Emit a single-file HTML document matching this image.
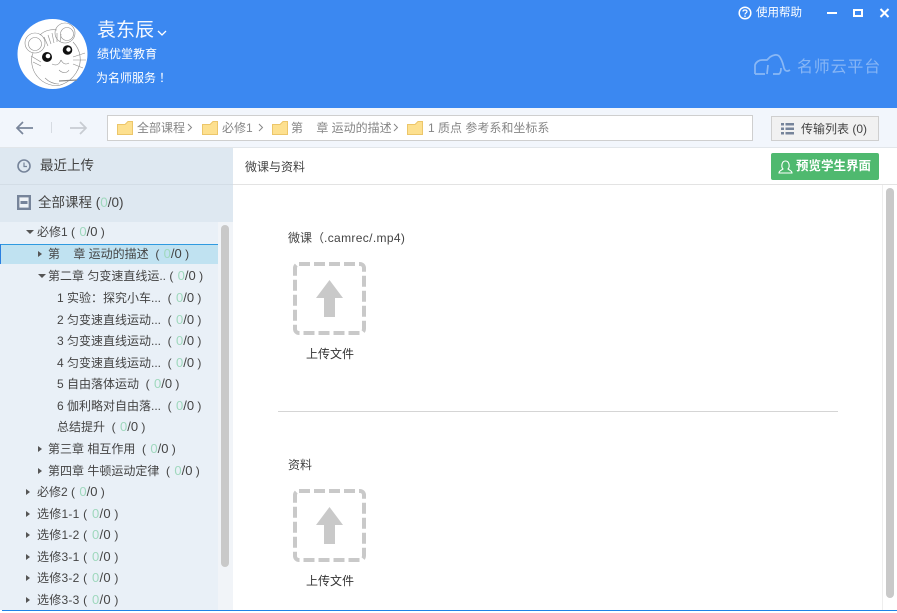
<!DOCTYPE html>
<html><head><meta charset="utf-8">
<style>
*{margin:0;padding:0;box-sizing:border-box}
html,body{width:897px;height:613px;overflow:hidden;background:#fff;font-family:"Liberation Sans","Noto Sans CJK SC",sans-serif;font-size:12px;color:#333}
.a{position:absolute}
.t{position:absolute;white-space:pre;line-height:16px;font-size:12px;color:#444}
.t i{font-style:normal;color:#9fd8bd;margin-left:1px}
.t b{font-weight:normal;font-size:13px}
.x{letter-spacing:.25px}
.tri{position:absolute;width:0;height:0}
.r{border-left:4px solid #555;border-top:3.5px solid transparent;border-bottom:3.5px solid transparent}
.d{border-top:4px solid #555;border-left:4px solid transparent;border-right:4px solid transparent}
.bc{position:absolute;top:121px;white-space:pre;line-height:14px;font-size:12px;color:#858585}
</style></head><body>
<div class="a" style="left:0;top:0;width:897px;height:108px;background:#3b88f1"></div>

<svg class="a" style="left:17px;top:18px" width="72" height="72" viewBox="0 0 72 72">
<circle cx="35.500" cy="36" r="35" fill="#fff"/>
<g fill="none" stroke="#8a8a8a" stroke-width=".6">
<circle cx="18" cy="25" r="10"/><circle cx="48" cy="15" r="10"/><circle cx="18" cy="26" r="6.500"/><circle cx="50" cy="16" r="6.500"/>
<path d="M23 17C28 12 35 11 40 12"/>
<path d="M16 35C13 42 15 52 20 58C26 66 38 70 46 66C56 62 65 50 63 38C62 30 58 26 56 24"/>
<path d="M31 28L27 19M34 26L31 17M37 25L35 15M40 24L40 15M43 24L44 16"/>
<path d="M56 39L68 35M56 42L69 42M56 46L66 50M14 38L24 44M16 44L24 48"/>
<path d="M44 42C42 47 39 48 35 46M44 42C46 46 49 47 52 45M42 52C46 56 50 55 52 52M28 60C32 64 36 66 42 66"/>
<path d="M42 63L60 62" stroke-width="1.200"/>
</g>
<circle cx="30" cy="39" r="5" fill="#111"/><circle cx="31" cy="38" r="2.300" fill="#fff"/>
<circle cx="50.500" cy="32" r="4.800" fill="#111"/><circle cx="51.500" cy="31.500" r="2.200" fill="#fff"/>
</svg>

<div class="a" style="left:97px;top:19px;font-size:19px;line-height:24px;color:#fff;opacity:.95">袁东辰</div>
<svg class="a" style="left:157px;top:30px" width="10" height="7"><path d="M1 1L5 5L9 1" fill="none" stroke="#fff" stroke-width="1.300"/></svg>
<div class="a" style="left:97px;top:46px;font-size:12px;line-height:16px;color:#fff">绩优堂教育</div>
<div class="a" style="left:96px;top:70px;font-size:12px;line-height:16px;color:#fff;white-space:pre">为名师服务<span style="margin-left:3px">！</span></div>

<svg class="a" style="left:738px;top:6px" width="14" height="14" viewBox="0 0 14 14"><circle cx="7" cy="7" r="5.800" fill="none" stroke="#fff" stroke-width="1.500"/><path d="M5 5.500C5 3.500 9 3.500 9 5.500C9 7 7 6.800 7 8.500" fill="none" stroke="#fff" stroke-width="1.200"/><rect x="6.300" y="9.500" width="1.400" height="1.400" fill="#fff"/></svg>
<div class="a" style="left:756px;top:6px;font-size:11.500px;line-height:15px;color:#fff">使用帮助</div>
<div class="a" style="left:827px;top:12px;width:10px;height:2px;background:#fff"></div>
<div class="a" style="left:853px;top:9px;width:10px;height:8px;border:2px solid #fff"></div>
<svg class="a" style="left:879px;top:8px" width="11" height="10"><path d="M1.500 1L9.500 9M9.500 1L1.500 9" stroke="#fff" stroke-width="2"/></svg>

<svg class="a" style="left:753px;top:53px" width="40" height="26" viewBox="0 0 40 26"><path d="M2 21V12C3 9 6 7 9 7H14L17 4C20 2 24 1 26 3C29 6 30 11 31 15C32 18 34 19 37 17M2 21H12M15 12L14 21M20 21H26C28 20 28 17 28 15" fill="none" stroke="#8ab8f5" stroke-width="1.700"/></svg>
<div class="a" style="left:797px;top:58px;font-size:16px;line-height:20px;color:#86b5f5;white-space:pre;letter-spacing:.8px">名师云平台</div>

<div class="a" style="left:0;top:108px;width:897px;height:40px;background:#f2f6fc;border-bottom:1px solid #e2e6ea"></div>
<svg class="a" style="left:15px;top:120px" width="20" height="16"><path d="M18 8H2M8 2L2 8L8 14" fill="none" stroke="#7a869b" stroke-width="1.700"/></svg>
<div class="a" style="left:51px;top:122px;width:1px;height:11px;background:#d6dbe2"></div>
<svg class="a" style="left:68px;top:120px" width="20" height="16"><path d="M2 8H18M12 2L18 8L12 14" fill="none" stroke="#c8ccd2" stroke-width="1.700"/></svg>

<div class="a" style="left:107px;top:115px;width:646px;height:26px;background:#fff;border:1px solid #cfcfcf"></div>
<svg width="0" height="0" style="position:absolute"><defs><symbol id="f" viewBox="0 0 16 14"><path d="M.5 3.500H8L11 .5H15.500V13.500H.5Z" fill="#fde08f" stroke="#ecc66a"/></symbol></defs></svg>
<svg class="a" style="left:117px;top:121px" width="16" height="14"><use href="#f"/></svg>
<div class="bc" style="left:137px">全部课程</div>
<svg class="a" style="left:187px;top:123px" width="6" height="9"><path d="M1 1L4.500 4.500L1 8" fill="none" stroke="#888"/></svg>
<svg class="a" style="left:202px;top:121px" width="16" height="14"><use href="#f"/></svg>
<div class="bc" style="left:222px">必修1</div>
<svg class="a" style="left:258px;top:123px" width="6" height="9"><path d="M1 1L4.500 4.500L1 8" fill="none" stroke="#888"/></svg>
<svg class="a" style="left:272px;top:121px" width="16" height="14"><use href="#f"/></svg>
<div class="bc" style="left:291px">第    章 运动的描述</div>
<svg class="a" style="left:393px;top:123px" width="6" height="9"><path d="M1 1L4.500 4.500L1 8" fill="none" stroke="#888"/></svg>
<svg class="a" style="left:407px;top:121px" width="16" height="14"><use href="#f"/></svg>
<div class="bc" style="left:428px">1 质点 参考系和坐标系</div>

<div class="a" style="left:771px;top:116px;width:108px;height:25px;background:#f1f1f1;border:1px solid #cfcfcf"></div>
<svg class="a" style="left:781px;top:123px" width="13" height="12"><g fill="#76849a"><rect width="3" height="2.500"/><rect x="4.500" width="8.500" height="2.500"/><rect y="4.500" width="3" height="2.500"/><rect x="4.500" y="4.500" width="8.500" height="2.500"/><rect y="9" width="3" height="2.500"/><rect x="4.500" y="9" width="8.500" height="2.500"/></g></svg>
<div class="a" style="left:801px;top:121px;font-size:12px;line-height:16px;color:#444;white-space:pre">传输列表 (0)</div>

<div class="a" style="left:0;top:148px;width:233px;height:462px;background:#e9f0f7"></div>
<div class="a" style="left:0;top:148px;width:233px;height:37px;background:#dee8f1;border-bottom:1px solid #d3dde6"></div>
<div class="a" style="left:0;top:185px;width:233px;height:37px;background:#dee8f1"></div>
<svg class="a" style="left:17px;top:159px" width="14" height="14"><circle cx="7" cy="7" r="6" fill="none" stroke="#76849a" stroke-width="1.600"/><path d="M7 3.500V7.500H10" fill="none" stroke="#76849a" stroke-width="1.200"/></svg>
<div class="a" style="left:40px;top:157px;font-size:13.500px;line-height:18px;color:#444">最近上传</div>
<svg class="a" style="left:17px;top:195px" width="14" height="15"><rect x="1.200" y="1.200" width="11.600" height="12.600" fill="#eef2f6" stroke="#76849a" stroke-width="2.400"/><rect x="3.500" y="6" width="7" height="3" fill="#76849a"/></svg>
<div class="a" style="left:38px;top:194px;font-size:13.500px;line-height:18px;color:#444;white-space:pre">全部课程 (<span style="color:#9fd8bd">0</span>/0)</div>

<div class="a" style="left:0;top:244px;width:218px;height:20px;background:#c0e2f1;border-top:1px solid #2f9ae0"></div>
<div class="a" style="left:0;top:244px;width:1px;height:20px;background:#2a7fe0"></div>

<div class="tri d" style="left:26px;top:230px"></div><div class="t" style="left:37px;top:224px">必修1 ( <b><i>0</i>/0</b> )</div>
<div class="tri r" style="left:38px;top:251px"></div><div class="t" style="left:48px;top:246px">第    章 运动的描述  ( <b><i>0</i>/0</b> )</div>
<div class="tri d" style="left:38px;top:274px"></div><div class="t" style="left:48px;top:268px">第二章 匀变速直线运.. ( <b><i>0</i>/0</b> )</div>
<div class="t" style="left:57px;top:290px">1 实验：探究小车...  ( <b><i>0</i>/0</b> )</div>
<div class="t" style="left:57px;top:312px">2 匀变速直线运动...  ( <b><i>0</i>/0</b> )</div>
<div class="t" style="left:57px;top:333px">3 匀变速直线运动...  ( <b><i>0</i>/0</b> )</div>
<div class="t" style="left:57px;top:355px">4 匀变速直线运动...  ( <b><i>0</i>/0</b> )</div>
<div class="t" style="left:57px;top:376px">5 自由落体运动  ( <b><i>0</i>/0</b> )</div>
<div class="t" style="left:57px;top:398px">6 伽利略对自由落...  ( <b><i>0</i>/0</b> )</div>
<div class="t" style="left:57px;top:419px">总结提升  ( <b><i>0</i>/0</b> )</div>
<div class="tri r" style="left:38px;top:446px"></div><div class="t" style="left:48px;top:441px">第三章 相互作用  ( <b><i>0</i>/0</b> )</div>
<div class="tri r" style="left:38px;top:468px"></div><div class="t" style="left:48px;top:463px">第四章 牛顿运动定律  ( <b><i>0</i>/0</b> )</div>
<div class="tri r" style="left:26px;top:489px"></div><div class="t" style="left:37px;top:484px">必修2 ( <b><i>0</i>/0</b> )</div>
<div class="tri r" style="left:26px;top:511px"></div><div class="t x" style="left:37px;top:506px">选修1-1 ( <b><i>0</i>/0</b> )</div>
<div class="tri r" style="left:26px;top:532px"></div><div class="t x" style="left:37px;top:527px">选修1-2 ( <b><i>0</i>/0</b> )</div>
<div class="tri r" style="left:26px;top:554px"></div><div class="t x" style="left:37px;top:549px">选修3-1 ( <b><i>0</i>/0</b> )</div>
<div class="tri r" style="left:26px;top:575px"></div><div class="t x" style="left:37px;top:570px">选修3-2 ( <b><i>0</i>/0</b> )</div>
<div class="tri r" style="left:26px;top:597px"></div><div class="t x" style="left:37px;top:592px">选修3-3 ( <b><i>0</i>/0</b> )</div>

<div class="a" style="left:218px;top:222px;width:15px;height:388px;background:#f1f4f8"></div>
<div class="a" style="left:221px;top:225px;width:8px;height:342px;background:#c9c9c9;border-radius:4px"></div>

<div class="a" style="left:233px;top:148px;width:664px;height:37px;background:#fff;border-bottom:1px solid #e3e3e3"></div>
<div class="a" style="left:245px;top:159px;font-size:12px;line-height:16px;color:#444">微课与资料</div>
<div class="a" style="left:771px;top:153px;width:108px;height:27px;background:#4fb96f;border-radius:2px"></div>
<svg class="a" style="left:778px;top:159px" width="15" height="15" viewBox="0 0 15 15"><path d="M5 10C3 8 3.500 2 7.500 2C11.500 2 12 8 10 10C11 11 14 11.500 14 14H1C1 11.500 4 11 5 10Z" fill="none" stroke="#fff" stroke-width="1.100"/></svg>
<div class="a" style="left:796px;top:158px;font-size:12.500px;line-height:17px;color:#fff;font-weight:bold">预览学生界面</div>

<div class="a" style="left:882px;top:185px;width:15px;height:425px;background:#fff;border-left:1px solid #eee"></div>
<div class="a" style="left:886px;top:188px;width:8px;height:410px;background:#c9c9c9;border-radius:4px"></div>

<div class="a" style="left:288px;top:230px;font-size:12px;line-height:16px;color:#444;white-space:pre">微课（<span style="letter-spacing:.35px">.camrec/.mp4)</span></div>
<svg class="a" style="left:292px;top:261px" width="75" height="75" viewBox="0 0 75 75"><rect x="3" y="3" width="69" height="69" rx="4" fill="none" stroke="#c9c9c9" stroke-width="4" stroke-dasharray="11 4"/><path d="M37.500 19L51 37H43V56H32V37H24Z" fill="#c9c9c9"/></svg>
<div class="a" style="left:306px;top:346px;font-size:12px;line-height:16px;color:#333">上传文件</div>

<div class="a" style="left:278px;top:411px;width:560px;height:1px;background:#d5d5d5"></div>

<div class="a" style="left:288px;top:457px;font-size:12px;line-height:16px;color:#444">资料</div>
<svg class="a" style="left:292px;top:488px" width="75" height="75" viewBox="0 0 75 75"><rect x="3" y="3" width="69" height="69" rx="4" fill="none" stroke="#c9c9c9" stroke-width="4" stroke-dasharray="11 4"/><path d="M37.500 19L51 37H43V56H32V37H24Z" fill="#c9c9c9"/></svg>
<div class="a" style="left:306px;top:573px;font-size:12px;line-height:16px;color:#333">上传文件</div>

<div class="a" style="left:2px;top:610px;width:895px;height:1px;background:#1f83e6"></div>
</body></html>
